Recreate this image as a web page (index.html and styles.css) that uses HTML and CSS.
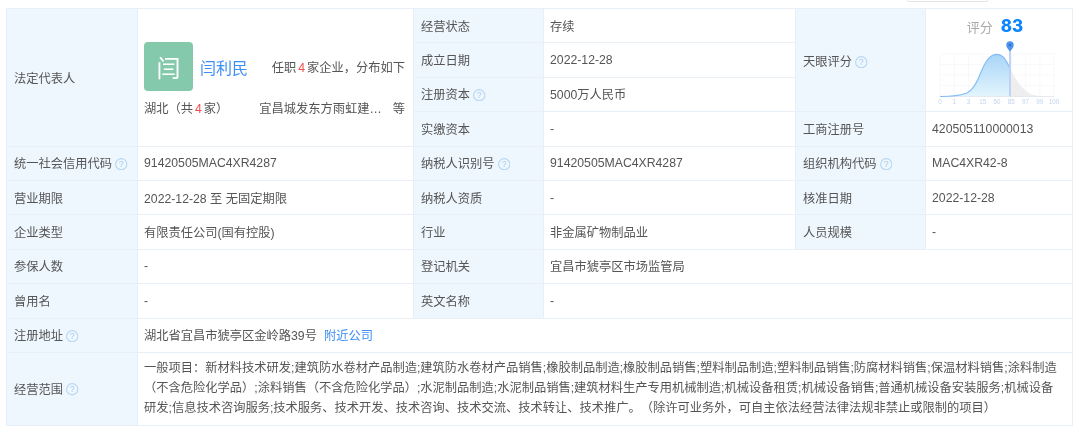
FILE: index.html
```html
<!DOCTYPE html>
<html lang="zh-CN">
<head>
<meta charset="utf-8">
<title>工商信息</title>
<link rel="stylesheet" href="styles.css">
</head>
<body>
<div class="topbar"><span class="tab-stub"></span></div>
<table class="info">
<colgroup><col class="c1"><col class="c2"><col class="c3"><col class="c4"><col class="c5"><col class="c6"></colgroup>
<tr>
  <th rowspan="4" class="lower">法定代表人</th>
  <td rowspan="4" class="legal">
    <div class="person">
      <div class="avatar">闫</div>
      <a class="name">闫利民</a>
      <span class="summary">任职<em>4</em>家企业，分布如下</span>
    </div>
    <div class="dist">
      <span>湖北（共<em>4</em>家）</span>
      <span class="company">宜昌城发东方雨虹建…</span>
      <span class="more">等</span>
    </div>
  </td>
  <th>经营状态</th><td>存续</td>
  <th rowspan="3" class="lower">天眼评分 <svg class="q" viewBox="0 0 12 12"><circle cx="6" cy="6" r="5.4"/><text x="6" y="8.8">?</text></svg></th>
  <td rowspan="3" class="score">
    <div class="score-head"><span class="score-label">评分</span><span class="score-num">83</span></div>
    <svg class="chart" viewBox="0 0 132 70" width="132" height="70">
      <defs>
        <linearGradient id="fillB" x1="0" y1="0" x2="0" y2="1"><stop offset="0" stop-color="#a9d4f8"/><stop offset="1" stop-color="#e2f5fd"/></linearGradient>
      </defs>
      <g class="grid">
        <path d="M7 16H121M7 26.500H121M7 37H121M7 47.500H121"/>
        <path d="M7 16V58M21.300 16V58M35.500 16V58M49.800 16V58M64 16V58M78.300 16V58M92.500 16V58M106.800 16V58M121 16V58"/>
      </g>
      <path class="area-b" d="M7 58.500C20 58.500 28 57.500 34 55C40 52 43 46 46 39C50 29 55 16.300 63.500 16.300C70 16.300 73 22 77 30.300V58.500Z"/>
      <path class="area-g" d="M77 30.300C82 41 89 51 97.500 56C104 58.500 112 58.500 121 58.500H77Z"/>
      <path class="base" d="M7 58.500H121"/>
      <path class="curve" d="M7 58.500C20 58.500 28 57.500 34 55C40 52 43 46 46 39C50 29 55 16.300 63.500 16.300C70 16.300 73 22 77 30.300"/>
      <path class="pin-line" d="M77 8V58.500"/>
      <path class="pin" d="M77 13.500C74.500 10.500 73.300 9 73.300 7A3.700 3.700 0 0 1 80.700 7C80.700 9 79.500 10.500 77 13.500Z"/>
      <circle class="pin-dot" cx="77" cy="7" r="1.300"/>
      <g class="ticks">
        <text x="7" y="66.300">0</text><text x="21.300" y="66.300">1</text><text x="35.500" y="66.300">3</text><text x="49.800" y="66.300">15</text><text x="64" y="66.300">50</text><text x="78.300" y="66.300">85</text><text x="92.500" y="66.300">97</text><text x="106.800" y="66.300">99</text><text x="121" y="66.300">100</text>
      </g>
    </svg>
  </td>
</tr>
<tr><th>成立日期</th><td>2022-12-28</td></tr>
<tr><th>注册资本 <svg class="q" viewBox="0 0 12 12"><circle cx="6" cy="6" r="5.4"/><text x="6" y="8.8">?</text></svg></th><td>5000万人民币</td></tr>
<tr><th>实缴资本</th><td>-</td><th>工商注册号</th><td>420505110000013</td></tr>
<tr>
  <th>统一社会信用代码 <svg class="q" viewBox="0 0 12 12"><circle cx="6" cy="6" r="5.4"/><text x="6" y="8.8">?</text></svg></th><td>91420505MAC4XR4287</td>
  <th>纳税人识别号 <svg class="q" viewBox="0 0 12 12"><circle cx="6" cy="6" r="5.4"/><text x="6" y="8.8">?</text></svg></th><td>91420505MAC4XR4287</td>
  <th>组织机构代码 <svg class="q" viewBox="0 0 12 12"><circle cx="6" cy="6" r="5.4"/><text x="6" y="8.8">?</text></svg></th><td>MAC4XR42-8</td>
</tr>
<tr><th>营业期限</th><td>2022-12-28 至 无固定期限</td><th>纳税人资质</th><td>-</td><th>核准日期</th><td>2022-12-28</td></tr>
<tr><th>企业类型</th><td>有限责任公司(国有控股)</td><th>行业</th><td>非金属矿物制品业</td><th>人员规模</th><td>-</td></tr>
<tr><th>参保人数</th><td>-</td><th>登记机关</th><td colspan="3">宜昌市猇亭区市场监管局</td></tr>
<tr><th>曾用名</th><td>-</td><th>英文名称</th><td colspan="3">-</td></tr>
<tr><th>注册地址 <svg class="q" viewBox="0 0 12 12"><circle cx="6" cy="6" r="5.4"/><text x="6" y="8.8">?</text></svg></th><td colspan="5">湖北省宜昌市猇亭区金岭路39号<a class="near">附近公司</a></td></tr>
<tr class="scope-row"><th>经营范围 <svg class="q" viewBox="0 0 12 12"><circle cx="6" cy="6" r="5.4"/><text x="6" y="8.8">?</text></svg></th><td colspan="5" class="scope">一般项目：新材料技术研发;建筑防水卷材产品制造;建筑防水卷材产品销售;橡胶制品制造;橡胶制品销售;塑料制品制造;塑料制品销售;防腐材料销售;保温材料销售;涂料制造<br>（不含危险化学品）;涂料销售（不含危险化学品）;水泥制品制造;水泥制品销售;建筑材料生产专用机械制造;机械设备租赁;机械设备销售;普通机械设备安装服务;机械设备<br>研发;信息技术咨询服务;技术服务、技术开发、技术咨询、技术交流、技术转让、技术推广。（除许可业务外，可自主依法经营法律法规非禁止或限制的项目）</td></tr>
</table>
</body>
</html>
```

FILE: styles.css
```css
* { box-sizing: border-box; }
html, body { margin: 0; padding: 0; background: #fff; }
body {
  width: 1080px;
  height: 438px;
  overflow: hidden;
  font-family: "Liberation Sans", "Noto Sans CJK SC", sans-serif;
  font-size: 12.25px;
  color: #555;
  text-spacing-trim: space-all;
}
.topbar { height: 8px; display: flex; justify-content: flex-end; padding-right: 92px; }
.tab-stub {
  width: 81px; height: 2px;
  border: 1px solid #e4e4e4; border-top: 0;
  border-radius: 0 0 2px 2px;
}
.info {
  margin-left: 6px;
  width: 1066px;
  table-layout: fixed;
  border-collapse: collapse;
  filter: blur(0.4px);
}
.c1 { width: 131px; } .c2 { width: 276px; } .c3 { width: 130px; }
.c4 { width: 252px; } .c5 { width: 130px; } .c6 { width: 147px; }
tr { height: 34.4px; }
th, td {
  border: 1px solid #e8eff6;
  padding: 0 6px;
  font-weight: 400;
  text-align: left;
  vertical-align: middle;
}
th { background: #eef6fe; padding-left: 7px; }
th.lower { padding-top: 2px; }
.q { width: 12.500px; height: 12.500px; vertical-align: -2px; margin-left: 0; }
.q circle { fill: none; stroke: #b6d6f2; stroke-width: 1; }
.q text { fill: #a9cdee; font-size: 8.500px; text-anchor: middle; font-family: "Liberation Sans", sans-serif; }
em { color: #f04b4b; font-style: normal; margin: 0 2px; }
.legal { padding-top: 5px; padding-right: 8px; }
.person { display: flex; align-items: center; }
.avatar {
  width: 49px; height: 49px;
  border-radius: 4px;
  background: #85c9ad;
  color: #fff;
  font-size: 24px;
  display: flex; align-items: center; justify-content: center;
}
.name { color: #3d8ff5; font-size: 16px; margin-left: 7px; }
.summary { margin-left: auto; }
.dist { display: flex; margin-top: 8px; }
.company { margin-left: 31px; }
.more { margin-left: auto; }
.score { padding: 0; text-align: center; vertical-align: top; }
.score-head { display: flex; justify-content: center; align-items: center; gap: 8px; height: 24px; margin-top: 5px; padding-right: 8px; }
.score-label { color: #aaa; font-size: 13px; }
.score-num { color: #0a84ff; font-size: 17px; font-weight: 800; font-family: "Inter", "Liberation Sans", sans-serif; }
.chart { display: block; margin: 0 0 0 6.500px; }
.grid path { fill: none; stroke: #f4f5f7; stroke-width: 0.6; }
.area-b { fill: url(#fillB); }
.area-g { fill: #eeeeee; }
.base { stroke: #dfe6ee; stroke-width: 0.8; fill: none; }
.curve { fill: none; stroke: #84bdf7; stroke-width: 1.200; }
.pin-line { stroke: #b9d0f5; stroke-width: 1.800; fill: none; }
.pin { fill: #4d93ee; }
.pin-dot { fill: #2a6fd0; }
.ticks text { fill: #c2d3ec; font-size: 6.300px; text-anchor: middle; }
.near { color: #3d8ff5; margin-left: 7px; }
.scope-row { height: 73px; }
.scope { line-height: 19.700px; padding-top: 0; padding-bottom: 0; white-space: nowrap; }
```
